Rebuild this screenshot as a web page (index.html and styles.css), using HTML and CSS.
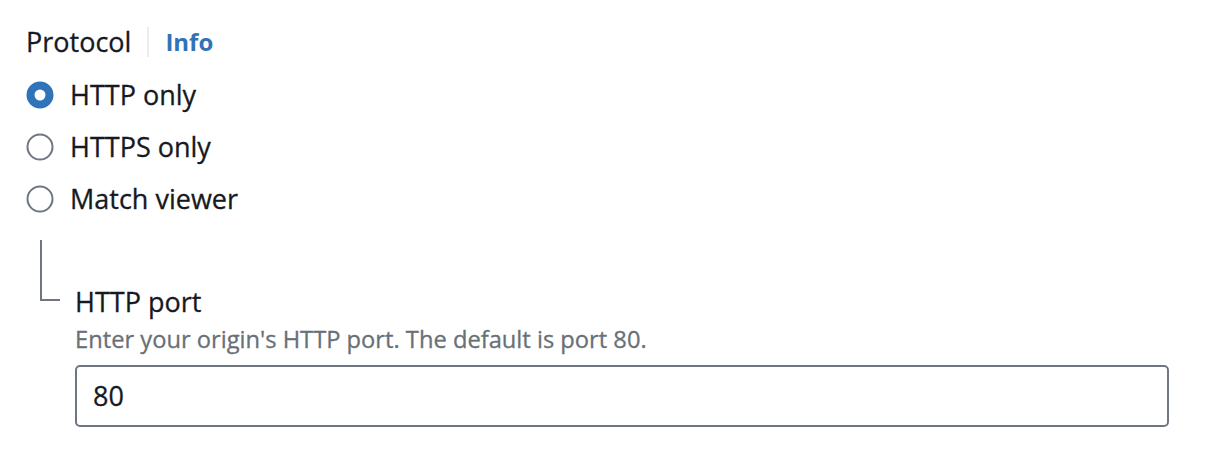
FILE: index.html
```html
<!DOCTYPE html>
<html>
<head>
<meta charset="utf-8">
<link rel="stylesheet" href="styles.css">
</head>
<body>
<div class="field">
  <div class="label-row">
    <span class="label">Protocol</span>
    <span class="divider"></span>
    <a class="info">Info</a>
  </div>
  <div class="radio-group">
    <label class="radio">
      <svg class="radio-icon" width="28" height="28" viewBox="0 0 28 28"><circle cx="14" cy="14" r="13.5" fill="#2f73b9"/><circle cx="14" cy="14" r="5.5" fill="#ffffff"/></svg>
      <span>HTTP only</span>
    </label>
    <label class="radio">
      <svg class="radio-icon" width="28" height="28" viewBox="0 0 28 28"><circle cx="14" cy="14" r="12.5" fill="#ffffff" stroke="#6f7680" stroke-width="2"/></svg>
      <span>HTTPS only</span>
    </label>
    <label class="radio">
      <svg class="radio-icon" width="28" height="28" viewBox="0 0 28 28"><circle cx="14" cy="14" r="12.5" fill="#ffffff" stroke="#6f7680" stroke-width="2"/></svg>
      <span>Match viewer</span>
    </label>
  </div>
  <div class="nested">
    <div class="connector"></div>
    <div class="nested-content">
      <div class="sub-label">HTTP port</div>
      <div class="description">Enter your origin's HTTP port. The default is port 80.</div>
      <div class="input">80</div>
    </div>
  </div>
</div>
</body>
</html>
```

FILE: styles.css
```css
html, body {
  margin: 0;
  padding: 0;
  background: #ffffff;
}
body {
  font-family: "Open Sans", "Noto Sans", sans-serif;
  color: #16191f;
  font-size: 27px;
  line-height: 38px;
  font-weight: 400;
  -webkit-text-stroke: 0.3px #16191f;
}
.field {
  padding: 23px 0 0 26px;
  display: flex;
  flex-direction: column;
}
.label-row {
  display: flex;
  align-items: center;
  height: 38px;
}
.divider {
  width: 2px;
  height: 30px;
  background: #eaeded;
  margin: 0 16px 0 16px;
}
.info {
  color: #2f73b9;
  font-weight: 700;
  font-size: 24px;
  -webkit-text-stroke: 0;
}
.radio-group {
  display: flex;
  flex-direction: column;
  gap: 14px;
  margin-top: 15px;
}
.radio {
  display: flex;
  align-items: center;
  gap: 16px;
  height: 38px;
}
.radio-icon {
  flex: none;
  display: block;
}
.nested {
  display: flex;
  margin-top: 22px;
}
.connector {
  flex: none;
  width: 18px;
  height: 59px;
  margin-left: 14px;
  margin-right: 15px;
  border-left: 2px solid #6f7680;
  border-bottom: 2px solid #6f7680;
}
.nested-content {
  flex: 1;
  padding-top: 43px;
  padding-right: 43px;
}
.sub-label {
  height: 38px;
}
.description {
  color: #687078;
  font-size: 23.7px;
  line-height: 32px;
  margin-top: 2px;
  -webkit-text-stroke: 0.3px #687078;
}
.input {
  margin-top: 10px;
  height: 58px;
  border: 2px solid #6f7680;
  border-radius: 5px;
  padding-left: 16px;
  display: flex;
  align-items: center;
}
```
